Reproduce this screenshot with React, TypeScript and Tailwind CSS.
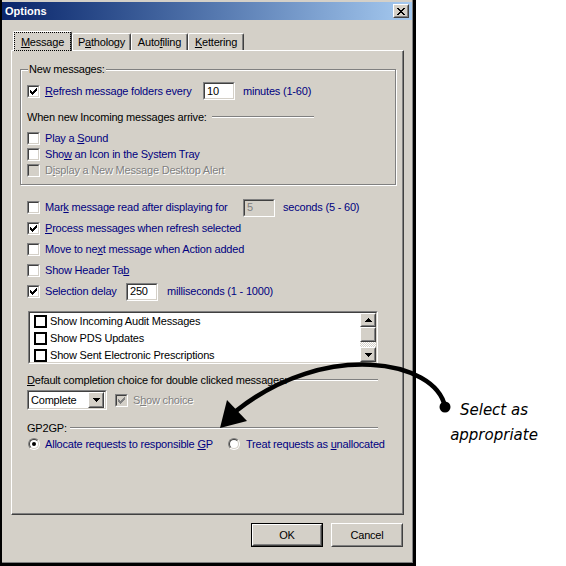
import clsx from 'clsx';
import type { ReactNode } from 'react';

const raisedOuter = 'border border-t-white border-l-white border-r-[#404040] border-b-[#404040]';
const raisedInner = 'border border-t-[#d4d0c8] border-l-[#d4d0c8] border-r-[#808080] border-b-[#808080]';
const sunkenOuter = 'border border-t-[#808080] border-l-[#808080] border-r-white border-b-white';
const sunkenInner = 'border border-t-[#404040] border-l-[#404040] border-r-[#d4d0c8] border-b-[#d4d0c8]';

function CheckMark({ color = '#000' }: { color?: string }) {
  return (
    <svg width="7" height="7" viewBox="0 0 7 7" shapeRendering="crispEdges">
      <path
        fill={color}
        d="M6 0h1v1h-1z M5 1h2v1h-2z M0 2h1v1h-1z M4 2h3v1h-3z M0 3h2v1h-2z M3 3h3v1h-3z M0 4h5v1h-5z M1 5h3v1h-3z M2 6h1v1h-1z"
      />
    </svg>
  );
}

function Check({ checked, disabled }: { checked?: boolean; disabled?: boolean }) {
  return (
    <span className={clsx('flex h-[13px] w-[13px] shrink-0', sunkenOuter)}>
      <span
        className={clsx(
          'flex h-full w-full items-center justify-center',
          sunkenInner,
          disabled ? 'bg-[#d4d0c8]' : 'bg-white',
        )}
      >
        {checked && <CheckMark color={disabled ? '#808080' : '#000'} />}
      </span>
    </span>
  );
}

function Radio({ checked }: { checked?: boolean }) {
  return (
    <span className="flex h-[12px] w-[12px] shrink-0 rounded-full border border-t-[#808080] border-l-[#808080] border-r-white border-b-white">
      <span className="flex h-full w-full items-center justify-center rounded-full border border-t-[#404040] border-l-[#404040] border-r-[#d4d0c8] border-b-[#d4d0c8] bg-white">
        {checked && <span className="h-[4px] w-[4px] rounded-full bg-black" />}
      </span>
    </span>
  );
}

function Field({ value, disabled, className }: { value: string; disabled?: boolean; className?: string }) {
  return (
    <span className={clsx('flex h-[18px] w-[32px] shrink-0', sunkenOuter, className)}>
      <span
        className={clsx(
          'flex h-full w-full items-center pl-[2px]',
          sunkenInner,
          disabled ? 'bg-[#d4d0c8] text-[#808080]' : 'bg-white text-black',
        )}
      >
        {value}
      </span>
    </span>
  );
}

function Etched({ className }: { className?: string }) {
  return <span className={clsx('h-[2px] border-t border-t-[#808080] border-b border-b-white', className)} />;
}

function Arrow({ up }: { up?: boolean }) {
  return (
    <svg width="7" height="4" viewBox="0 0 7 4" shapeRendering="crispEdges">
      <path
        fill="#000"
        d={up ? 'M3 0h1v1h-1z M2 1h3v1h-3z M1 2h5v1h-5z M0 3h7v1h-7z' : 'M0 0h7v1h-7z M1 1h5v1h-5z M2 2h3v1h-3z M3 3h1v1h-1z'}
      />
    </svg>
  );
}

function Raised({ className, children }: { className?: string; children?: ReactNode }) {
  return (
    <span className={clsx('flex shrink-0 bg-[#d4d0c8]', raisedOuter, className)}>
      <span className={clsx('flex h-full w-full items-center justify-center', raisedInner)}>{children}</span>
    </span>
  );
}

function Row({ checked, disabled, children, className }: { checked?: boolean; disabled?: boolean; children: ReactNode; className?: string }) {
  return (
    <div className={clsx('flex items-center', className ?? 'h-[21px]')}>
      <Check checked={checked} disabled={disabled} />
      <span
        className={clsx(
          'ml-[5px]',
          disabled ? 'text-[#808080] [text-shadow:1px_1px_0_white]' : 'text-[#000080]',
        )}
      >
        {children}
      </span>
    </div>
  );
}

const tabs = [
  { key: 'M', rest: 'essage', pre: '', w: 'w-[59px]' },
  { key: 'a', rest: 'thology', pre: 'P', w: 'w-[59px]' },
  { key: 'f', rest: 'iling', pre: 'Auto', w: 'w-[57px]' },
  { key: 'K', rest: 'ettering', pre: '', w: 'w-[56px]' },
];

const listItems = ['Show Incoming Audit Messages', 'Show PDS Updates', 'Show Sent Electronic Prescriptions'];

export default function App() {
  return (
    <div className="relative flex h-[566px] w-[566px] overflow-hidden whitespace-nowrap bg-white font-['Liberation_Sans',Arial,sans-serif] text-[11px] leading-[13px] tracking-[-0.2px] text-black">
      {/* dialog window */}
      <div className="h-[566px] w-[416px] shrink-0 border-l-2 border-r-[3px] border-b-[3px] border-black bg-[#d4d0c8]">
        <div className="flex h-full flex-col border-r border-b border-[#808080] pt-[2px]">
          {/* title bar */}
          <div className="flex h-[18px] items-center justify-between bg-gradient-to-r from-[#0a246a] to-[#a6caf0] pl-[3px] pr-[3px]">
            <span className="text-[11px] font-bold tracking-normal text-white">Options</span>
            <Raised className="h-[14px] w-[16px]">
              <svg width="8" height="7" viewBox="0 0 8 7" shapeRendering="crispEdges">
                <path
                  fill="#000"
                  d="M0 0h2v1h-2z M6 0h2v1h-2z M1 1h2v1h-2z M5 1h2v1h-2z M2 2h4v1h-4z M3 3h2v1h-2z M2 4h4v1h-4z M1 5h2v1h-2z M5 5h2v1h-2z M0 6h2v1h-2z M6 6h2v1h-2z"
                />
              </svg>
            </Raised>
          </div>

          {/* tabs */}
          <div className="relative z-10 mt-[11px] -mb-[1px] ml-[11px] flex h-[20px] items-end">
            {tabs.map((t, i) =>
              i === 0 ? (
                <div
                  key={t.key}
                  className={clsx(
                    'h-[20px] rounded-t-[2px] border-l border-t border-r border-l-white border-t-white border-r-[#404040] bg-[#d4d0c8] shadow-[inset_-1px_0_0_#808080]',
                    t.w,
                  )}
                >
                  <div className="flex h-[19px] w-full items-center justify-center border border-dotted border-black pt-[1px]">
                    <span>
                      {t.pre}
                      <span className="underline">{t.key}</span>
                      {t.rest}
                    </span>
                  </div>
                </div>
              ) : (
                <div
                  key={t.key}
                  className={clsx(
                    'mb-[1px] flex h-[17px] items-center justify-center rounded-t-[2px] border-l border-t border-r border-l-white border-t-white border-r-[#404040] pt-[1px] shadow-[inset_-1px_0_0_#808080]',
                    t.w,
                  )}
                >
                  <span>
                    {t.pre}
                    <span className="underline">{t.key}</span>
                    {t.rest}
                  </span>
                </div>
              ),
            )}
          </div>

          {/* tab panel */}
          <div className="ml-[9px] h-[465px] w-[393px] border border-t-white border-l-white border-r-[#404040] border-b-[#404040] shadow-[inset_-1px_-1px_0_#808080]">
            {/* new messages group */}
            <div className="relative mt-[18px] ml-[8px] h-[116px] w-[376px] border border-[#808080] pt-[12px] pl-[6px] shadow-[inset_1px_1px_0_white,1px_1px_0_white]">
              <span className="absolute -top-[8px] left-[7px] bg-[#d4d0c8] px-[1px] leading-[14px]">New messages:</span>
              <div className="flex h-[18px] items-center">
                <Check checked />
                <span className="ml-[5px] w-[158px] text-[#000080]">
                  <span className="underline">R</span>efresh message folders every
                </span>
                <Field value="10" />
                <span className="ml-[8px] text-[#000080]">minutes (1-60)</span>
              </div>
              <div className="mt-[9px] flex h-[16px] items-center">
                <span>When new Incoming messages arrive:</span>
                <Etched className="ml-[5px] w-[102px]" />
              </div>
              <div className="mt-[5px]">
                <Row className="h-[16px]">
                  Play a <span className="underline">S</span>ound
                </Row>
                <Row className="h-[16px]">
                  Sho<span className="underline">w</span> an Icon in the System Tray
                </Row>
                <Row className="h-[16px]" disabled>
                  D<span className="underline">i</span>splay a New Message Desktop Alert
                </Row>
              </div>
            </div>

            <div className="pl-[15px] pr-[25px]">
              <div className="mt-[12px] flex h-[21px] items-center">
                <Check />
                <span className="ml-[5px] w-[198px] text-[#000080]">
                  Mar<span className="underline">k</span> message read after displaying for
                </span>
                <Field value="5" disabled />
                <span className="ml-[8px] text-[#000080]">seconds (5 - 60)</span>
              </div>
              <Row checked>
                <span className="underline">P</span>rocess messages when refresh selected
              </Row>
              <Row>
                Move to ne<span className="underline">x</span>t message when Action added
              </Row>
              <Row>
                Show Header Ta<span className="underline">b</span>
              </Row>
              <div className="flex h-[21px] items-center">
                <Check checked />
                <span className="ml-[5px] w-[81px] text-[#000080]">Selection delay</span>
                <Field value="250" />
                <span className="ml-[9px] text-[#000080]">milliseconds (1 - 1000)</span>
              </div>

              {/* list box */}
              <div className={clsx('mt-[9px] ml-[1px] flex h-[53px] w-[350px]', sunkenOuter)}>
                <div className={clsx('flex h-full w-full overflow-hidden bg-white', sunkenInner)}>
                  <div className="flex-1 pl-[4px]">
                    {listItems.map((item) => (
                      <div key={item} className="flex h-[17px] items-center">
                        <span className="h-[13px] w-[13px] shrink-0 border-2 border-black bg-white" />
                        <span className="ml-[3px]">{item}</span>
                      </div>
                    ))}
                  </div>
                  <div className="flex w-[16px] flex-col">
                    <Raised className="h-[14px] w-[16px]">
                      <Arrow up />
                    </Raised>
                    <Raised className="h-[15px] w-[16px]" />
                    <div className="h-[5px] bg-[repeating-conic-gradient(#d4d0c8_0_25%,white_0_50%)] bg-[length:2px_2px]" />
                    <Raised className="h-[15px] w-[16px]">
                      <Arrow />
                    </Raised>
                  </div>
                </div>
              </div>

              <div className="mt-[8px] flex h-[16px] items-center">
                <span>
                  <span className="underline">D</span>efault completion choice for double clicked messages:
                </span>
                <Etched className="ml-[4px] flex-1" />
              </div>
              <div className="mt-[2px] flex h-[20px] items-center">
                <div className={clsx('flex h-[20px] w-[80px]', sunkenOuter)}>
                  <div className={clsx('flex h-full w-full items-center bg-white pl-[2px] pr-[1px]', sunkenInner)}>
                    <span className="flex-1">Complete</span>
                    <Raised className="h-[16px] w-[16px]">
                      <Arrow />
                    </Raised>
                  </div>
                </div>
                <span className="ml-[8px]">
                  <Check checked disabled />
                </span>
                <span className="ml-[5px] text-[#808080] [text-shadow:1px_1px_0_white]">
                  S<span className="underline">h</span>ow choice
                </span>
              </div>

              <div className="mt-[10px] flex h-[16px] items-center">
                <span>GP2GP:</span>
                <Etched className="ml-[3px] flex-1" />
              </div>
              <div className="flex h-[16px] items-center pl-[1px] text-[#000080]">
                <div className="flex w-[200px] shrink-0 items-center">
                  <Radio checked />
                  <span className="ml-[5px]">
                    Allocate requests to responsible <span className="underline">G</span>P
                  </span>
                </div>
                <Radio />
                <span className="ml-[6px] shrink-0">
                  Treat requests as <span className="underline">u</span>nallocated
                </span>
              </div>
            </div>
          </div>

          {/* buttons */}
          <div className="mt-[8px] flex justify-end gap-[8px] pr-[9px]">
            <span className="flex h-[24px] w-[72px] border border-black">
              <Raised className="h-full w-full">OK</Raised>
            </span>
            <Raised className="h-[24px] w-[72px]">Cancel</Raised>
          </div>
        </div>
      </div>

      {/* annotation */}
      <div className="flex-1 pt-[398px] pl-[6px] text-center font-['DejaVu_Sans',sans-serif] text-[15px] italic leading-[25px] tracking-normal text-black">
        <div>Select as</div>
        <div>appropriate</div>
      </div>

      <svg className="pointer-events-none absolute left-0 top-0" width="566" height="566" viewBox="0 0 566 566">
        <path d="M445 407 C 436 360, 325 340, 236 411" fill="none" stroke="#000" strokeWidth="4.5" strokeLinecap="round" />
        <polygon points="220,428 227,400 247,421" fill="#000" />
        <circle cx="445" cy="407" r="5.5" fill="#000" />
      </svg>
    </div>
  );
}
